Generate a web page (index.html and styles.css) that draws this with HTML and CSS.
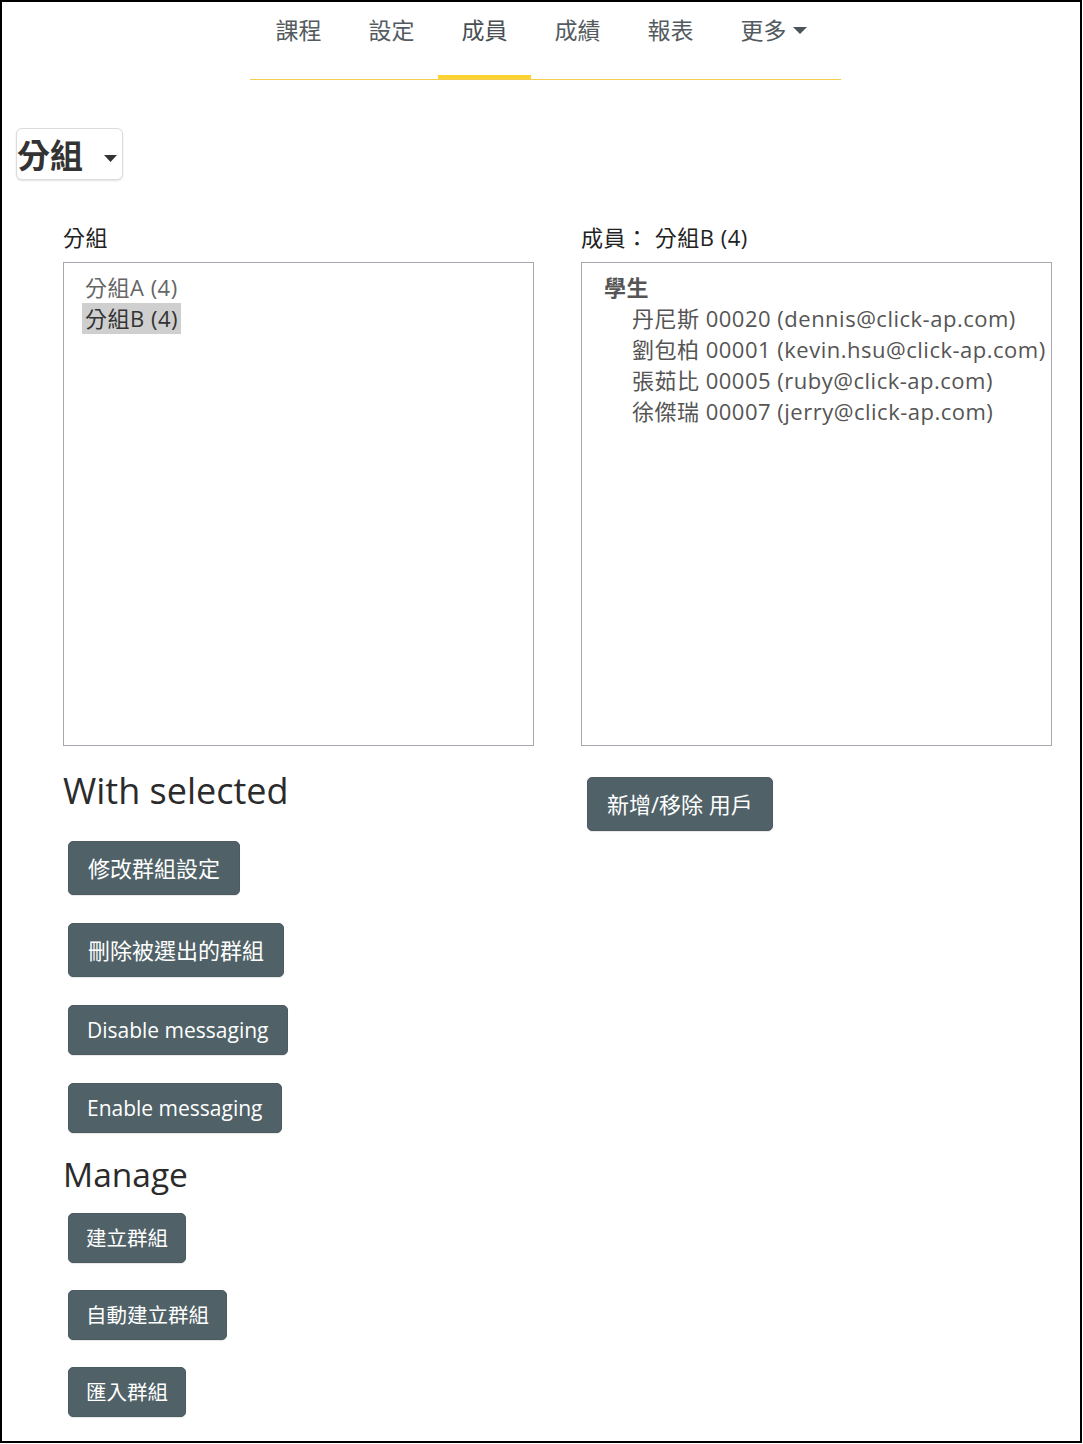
FILE: index.html
```html
<!DOCTYPE html>
<html lang="zh-Hant">
<head>
<meta charset="utf-8">
<title>分組</title>
<link rel="stylesheet" href="styles.css">
</head>
<body>
<div class="page">
  <nav class="tabs">
    <a class="tab">課程</a>
    <a class="tab">設定</a>
    <a class="tab active">成員</a>
    <a class="tab">成績</a>
    <a class="tab">報表</a>
    <a class="tab">更多<svg class="tab-caret" width="14" height="7" viewBox="0 0 14 7"><path d="M0 0H14L7 7Z" fill="#4a5459"/></svg></a>
  </nav>

  <div class="picker">
    <button class="picker-btn">分組<svg class="picker-caret" width="13" height="7" viewBox="0 0 13 7"><path d="M0 0H13L6.5 7Z" fill="#333"/></svg></button>
  </div>

  <div class="columns">
    <div class="col">
      <div class="field-label">分組</div>
      <div class="listbox">
        <div class="opt">分組A (4)</div>
        <div class="opt selected">分組B (4)</div>
      </div>
      <h3 class="heading-lg">With selected</h3>
      <div class="btn-stack">
        <button class="btn btn-cjk">修改群組設定</button>
        <button class="btn btn-cjk">刪除被選出的群組</button>
        <button class="btn">Disable messaging</button>
        <button class="btn">Enable messaging</button>
      </div>
      <h4 class="heading-md">Manage</h4>
      <div class="btn-stack manage">
        <button class="btn btn-sm">建立群組</button>
        <button class="btn btn-sm">自動建立群組</button>
        <button class="btn btn-sm">匯入群組</button>
      </div>
    </div>
    <div class="col">
      <div class="field-label">成員：&nbsp;分組B (4)</div>
      <div class="listbox members">
        <div class="role">學生</div>
        <div class="member">丹尼斯 00020 (dennis@click-ap.com)</div>
        <div class="member">劉包柏 00001 (kevin.hsu@click-ap.com)</div>
        <div class="member">張茹比 00005 (ruby@click-ap.com)</div>
        <div class="member">徐傑瑞 00007 (jerry@click-ap.com)</div>
      </div>
      <div class="right-actions">
        <button class="btn btn-cjk">新增/移除 用戶</button>
      </div>
    </div>
  </div>
</div>
</body>
</html>
```

FILE: styles.css
```css
* { box-sizing: border-box; }

html, body {
  margin: 0;
  padding: 0;
  background: #fff;
}

body {
  font-family: "Open Sans", "Noto Sans CJK TC", sans-serif;
  font-size: 22px;
  color: #333;
}

.page {
  width: 1082px;
  height: 1443px;
  border: 2px solid #000;
  overflow: hidden;
}

/* Tabs */
.tabs {
  display: flex;
  width: 591px;
  margin-left: 248px;
  padding-left: 2px;
  border-bottom: 1px solid #f4cf4f;
}

.tab {
  display: flex;
  align-items: center;
  gap: 6px;
  padding: 12px 23.5px 29px;
  line-height: 32px;
  font-size: 23px;
  color: #535b60;
  border-bottom: 4px solid transparent;
  cursor: pointer;
}

.tab.active {
  border-bottom-color: #fdd231;
  color: #474f54;
}

.tab-caret {
  display: block;
  margin-top: 1px;
}

/* Group picker */
.picker {
  margin: 48px 0 0 14px;
}

.picker-btn {
  display: flex;
  align-items: center;
  gap: 21px;
  height: 52px;
  padding: 0 5px 0 0;
  font-family: "Noto Sans CJK TC", sans-serif;
  font-size: 33px;
  font-weight: 700;
  color: #333;
  background: #fff;
  border: 1px solid #dcdcdc;
  border-radius: 6px;
  box-shadow: 0 1px 2px rgba(0, 0, 0, 0.12);
}

.picker-caret {
  display: block;
  margin-top: 8px;
}

/* Columns */
.columns {
  display: grid;
  grid-template-columns: 471px 471px;
  column-gap: 47px;
  margin: 43px 0 0 61px;
}

.field-label {
  font-size: 22px;
  line-height: 28px;
  color: #222;
  letter-spacing: 0.5px;
  margin-bottom: 11px;
}

.listbox {
  height: 484px;
  border: 1px solid #a3a9ae;
  padding: 9px 18px;
  letter-spacing: 0.5px;
}

.opt {
  display: table;
  padding: 0 3px;
  line-height: 31px;
  color: #666;
}

.opt.selected {
  background: #cfcfcf;
  color: #333;
}

.members {
  padding: 9px 22px;
}

.role {
  font-weight: 700;
  color: #555;
  line-height: 31px;
}

.member {
  padding-left: 28px;
  line-height: 31px;
  color: #555;
  white-space: nowrap;
}

.heading-lg {
  margin: 23px 0 0;
  font-size: 36px;
  font-weight: 400;
  line-height: 44px;
  color: #2b2b2b;
}

.heading-md {
  margin: 20px 0 0;
  font-size: 33.5px;
  font-weight: 400;
  line-height: 42px;
  color: #2b2b2b;
}

.btn-stack {
  display: flex;
  flex-direction: column;
  align-items: flex-start;
  gap: 28px;
  margin-top: 28px;
  padding-left: 5px;
}

.btn-stack.manage {
  margin-top: 18px;
  gap: 27px;
}

.btn {
  height: 50px;
  padding: 0 18px;
  font-family: "Open Sans", "Noto Sans CJK TC", sans-serif;
  font-size: 21px;
  line-height: 48px;
  color: #fff;
  background: #506268;
  border: 1px solid #4a5b61;
  border-radius: 5px;
  box-shadow: 0 1px 1px rgba(0, 0, 0, 0.1);
}

.btn-cjk {
  height: 54px;
  padding: 0 19px;
  font-size: 22px;
  line-height: 52px;
}

.btn-sm {
  padding: 0 17px;
  font-size: 20.5px;
}

.right-actions {
  margin: 31px 0 0 6px;
}
```
